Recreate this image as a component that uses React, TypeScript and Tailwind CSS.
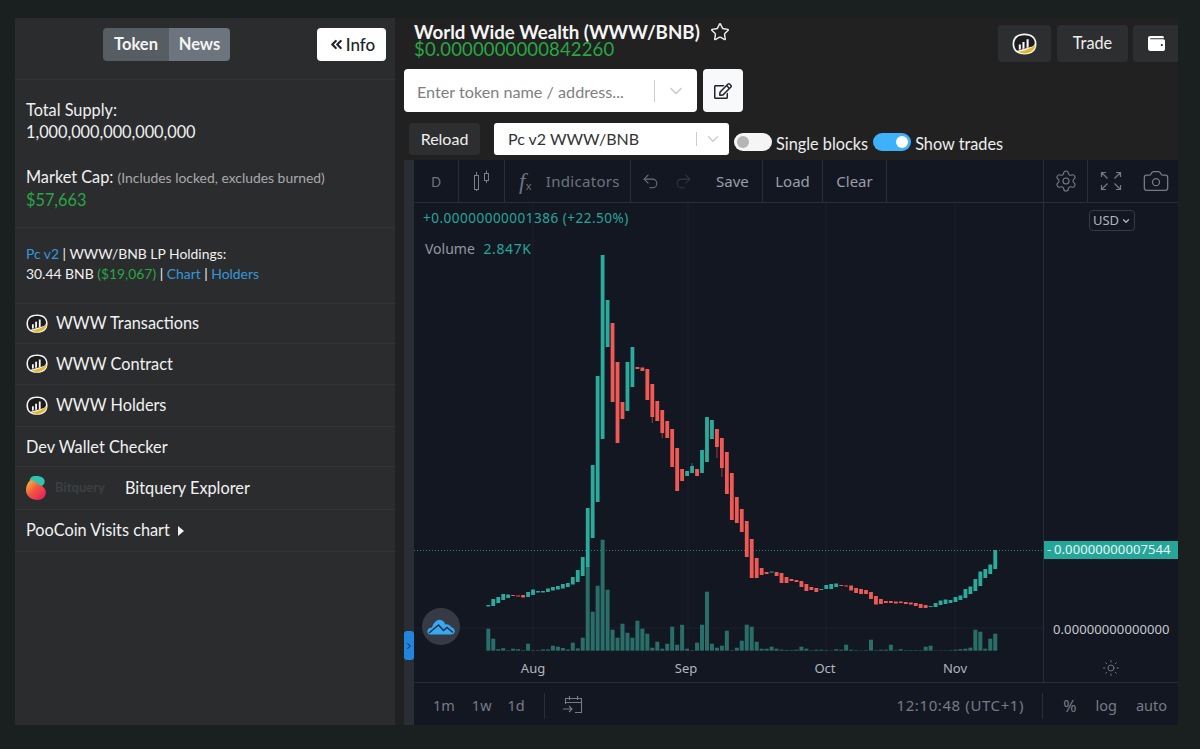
import { Camera, ChevronDown, ChevronRight, ChevronsLeft, Redo2, Settings, Star, Sun, Undo2 } from "lucide-react";
import { FaRegEdit, FaWallet } from "react-icons/fa";

// top, bottom, direction, optional wick end (page pixels, the svg viewBox starts at the plot's corner)
type Candle = [number, number, "u" | "d", number?];

const candles: Candle[] = [
  [605, 606.5, "u"], [599, 606, "u"], [597, 603, "u"], [594, 600, "u"], [594.5, 598, "u"], [595, 596, "d"],
  [595.5, 596.5, "d"], [595, 597.5, "d"], [592, 597, "u"], [589.5, 595, "u"], [591, 592.5, "u"], [591, 592.5, "u"],
  [588.5, 592, "u"], [587, 590.5, "u"], [586, 589.5, "u"], [584, 588.5, "u"], [583, 587, "u"], [577, 584.5, "u"],
  [570, 582, "u"], [557, 576, "u"], [508, 567, "u"], [465, 538, "u"], [376, 502, "u"], [255, 439, "u"],
  [300, 347, "u"], [323, 402, "d"], [362, 443, "d"], [402, 419, "d"], [362, 411, "u"], [347, 387, "u"],
  [367, 369, "d"], [367.5, 371, "d"], [369, 400, "d"], [384, 417, "d", 423], [401, 421, "d"], [410, 433, "d", 438],
  [421, 438, "d"], [429, 467, "d"], [448, 491, "d"], [469, 481, "d"], [471, 476, "u"], [466, 473, "u", 463],
  [469, 476, "d"], [450, 473, "u"], [417, 462, "u"], [420, 439, "u"], [429, 447, "d", 458], [438, 468, "d", 477],
  [452, 494, "d"], [473, 520, "d"], [497, 523, "d"], [509, 532, "d"], [521, 557, "d"], [539, 578, "d"],
  [558, 578, "d"], [568, 575, "d"], [572, 574, "d"], [571.5, 572.5, "u"], [572, 576, "d"], [573, 583, "d"],
  [577, 583, "d"], [579, 581, "d"], [580, 582, "d"], [581, 587, "d"], [584, 591, "d"], [587, 590, "d"],
  [588, 592, "d"], [589, 590, "u"], [585, 589, "u"], [584, 589, "u"], [583.5, 587, "u"], [585, 586, "d"],
  [585.5, 586.5, "d"], [585.5, 590.5, "d"], [588, 593, "d"], [589, 594, "d"], [590, 594, "d"], [592, 599, "d"],
  [596, 604.5, "d"], [599, 604, "d"], [601, 603, "d"], [601, 603, "d"], [601.5, 603.5, "d"], [601.5, 603, "d"],
  [602, 604, "d"], [602.5, 604.5, "d"], [603, 606, "d"], [604, 608, "d"], [605, 608, "d"], [606, 607, "u"],
  [603, 607, "u"], [600.5, 605, "u"], [599.5, 604, "u"], [600, 603, "u"], [597, 602, "u"], [595.5, 600, "u"],
  [589, 598, "u"], [586.5, 594, "u"], [579, 591, "u"], [571.5, 586, "u"], [569, 578, "u"], [564.5, 574, "u"],
  [550, 569, "u"],
];

const volumes = [
  22, 12, 1.5, 2.5, 0.5, 2, 1.5, 0.5, 7, 0.5, 0.5, 1.3, 1.3, 5, 4, 2.7, 1.3, 8, 2.3, 13, 84, 39, 65, 111, 61, 21,
  13, 27, 18, 13, 30, 22, 17, 3, 9, 2, 7, 24, 6, 26, 2, 0.5, 8, 26, 59, 7, 3, 5, 20, 0.5, 3, 10, 26, 24, 9, 2, 2,
  4, 2, 1, 0.7, 0.7, 1, 4, 2, 0.5, 1, 1, 0.5, 0.3, 1.5, 1, 6, 1, 0.5, 0.3, 0.5, 11, 0.5, 1, 1, 6, 0.5, 1.5, 0.5,
  0.5, 0.5, 0.5, 4, 5, 0.3, 0.3, 0.3, 0.5, 1, 1.5, 2, 3, 21, 19, 2, 12, 17,
];

const xOf = (i: number) => 488.3 + i * 4.97;

const PooLogo = ({ size = 22 }: { size?: number }) => (
  <svg width={size} height={size * 0.88} viewBox="0 0 24 21" className="shrink-0">
    <path d="M12 .5C19 .5 23.5 4 23.5 10.500C23.5 17 19 20.500 12 20.500C5 20.500 .5 17 .5 10.500C.5 4 5 .5 12 .5z" fill="#f7f7f5" />
    <path d="M12 2.200C17.800 2.200 21.800 5 21.800 9.500C21.800 11 21 12 19.500 13L5 17C3 15.500 2.200 13 2.200 10C2.200 5 6.200 2.200 12 2.200z" fill="#1c1c1e" />
    <path d="M6 17.800C11 17.500 17 15.500 22.500 11.500C22 16 18 19.500 12 19.500C9.500 19.500 7.500 19 6 17.800z" fill="#e3b62b" />
    <path d="M6.500 11h2v4.600l-2 .5zM10 8.500h2v6.300l-2 .5zM14 6h2v7.800l-2 .6z" fill="#f7f7f5" />
  </svg>
);

const BitqueryLogo = () => (
  <svg width="20" height="24" viewBox="0 0 20 24" className="shrink-0">
    <defs>
      <linearGradient id="bq" x1="0.1" y1="0.2" x2="0.8" y2="0.9">
        <stop offset="0" stopColor="#f5a03c" />
        <stop offset="0.45" stopColor="#f0553f" />
        <stop offset="1" stopColor="#e8265e" />
      </linearGradient>
    </defs>
    <path d="M5 1.500C7 -.5 14 -.5 17 2c2.500 2.200 2 5.800-.5 7.500C13 11.500 8 10 5 7.500 3 5.800 3.500 3 5 1.500z" fill="#2fc4b2" />
    <path d="M2 7C3.500 4 6 3.500 8 5c2 1.600 4 3 7 4.500 3.500 1.800 5 4.500 4.800 7.500-.3 4-3.600 7-8 7C5 24 0 20 0 14c0-2.500.8-5 2-7z" fill="url(#bq)" />
  </svg>
);

const CandleIcon = () => (
  <svg width="18" height="22" viewBox="0 0 18 22" fill="none" stroke="currentColor" strokeWidth="1">
    <rect x="1.500" y="5.500" width="4" height="14" />
    <path d="M3.500 2v3.500M3.500 19.500V21" />
    <rect x="11.500" y="3.500" width="4" height="7" />
    <path d="M13.500 0.500v3M13.500 10.500V13" />
  </svg>
);

const ExpandIcon = () => (
  <svg width="22" height="20" viewBox="0 0 22 20" fill="none" stroke="currentColor" strokeWidth="1.200">
    <path d="M1.500 6V1.500H6M1.500 1.500l6 6M20.500 6V1.500H16M20.500 1.500l-6 6M1.500 14v4.500H6M1.500 18.500l6-6M20.500 14v4.500H16M20.500 18.500l-6-6" />
  </svg>
);

const CalendarGo = () => (
  <svg width="22" height="20" viewBox="0 0 22 20" fill="none" stroke="currentColor" strokeWidth="1.100">
    <path d="M3.500 9V3.500h16v14H13M3.500 7.500h16M7.500 1v4M15.500 1v4M1 14h9M7 11l3 3-3 3" />
  </svg>
);

const CloudLogo = () => (
  <div className="flex h-[37px] w-[38px] items-center justify-center rounded-full bg-[#363a45]">
    <svg width="28" height="16" viewBox="0 0 28 16">
      <path d="M4 15.500C1 15.500 0 13.500 .5 11.500 1 9.500 3 8.500 5 8.500 6 5 9 1 12.500 .8 15.500 .7 17.500 3 18.500 5.500 20.500 5 23 5.800 24 8 26.500 8.500 28 10.500 27.800 12.500 27.500 14.500 26 15.500 24 15.500z" fill="#37a8f2" />
      <path d="M2 14 11.500 6 16.500 11.500 20 8.500 26 13.500" fill="none" stroke="#27303f" strokeWidth="1.600" />
    </svg>
  </div>
);

const Toggle = ({ on }: { on?: boolean }) => (
  <span className={`flex h-[18px] w-[38px] items-center rounded-full px-[3px] ${on ? "justify-end bg-[#3fb1fb]" : "justify-start bg-[#f5f5f5]"}`}>
    <span className={`h-[12px] w-[12px] rounded-full ${on ? "bg-white" : "bg-[#b5b5b5]"}`} />
  </span>
);

const SideRow = ({ children, h }: { children: React.ReactNode; h: string }) => (
  <div className={`flex ${h} items-center border-b border-[#333436] pl-[11px] text-[16.3px] text-[#f2f2f2]`}>{children}</div>
);

const Sidebar = () => (
  <aside className="w-[380px] shrink-0 bg-[#2b2c2e] font-['Lato',sans-serif]">
    <div className="relative flex h-[62px] items-start justify-end border-b border-[#333436] pr-[9px] pt-[10px]">
      <div className="absolute left-[88px] top-[10px] flex h-[33px] overflow-hidden rounded-[4px] text-[16.5px] font-bold text-[#f4f4f4]">
        <span className="flex w-[66px] items-center justify-center bg-[#565d63]">Token</span>
        <span className="flex w-[61px] items-center justify-center bg-[#6c757d]">News</span>
      </div>
      <button className="flex h-[33px] w-[69px] items-center justify-center rounded-[4px] bg-white text-[17px] font-medium text-[#212529]">
        <ChevronsLeft size={17} strokeWidth={3} className="mr-[1px]" />
        Info
      </button>
    </div>

    <div className="h-[148px] border-b border-[#333436] pl-[11px] pt-[19px] text-[16.3px] leading-[22px] text-[#f0f0f0]">
      <div>Total Supply:</div>
      <div>1,000,000,000,000,000</div>
      <div className="mt-[23px]">
        Market Cap: <span className="text-[13.9px] text-[#a9aaab]">(Includes locked, excludes burned)</span>
      </div>
      <div className="text-[#28a745]">$57,663</div>
    </div>

    <div className="h-[76px] border-b border-[#333436] pl-[11px] pt-[16px] text-[13.9px] leading-[20px] text-[#f0f0f0]">
      <div>
        <span className="text-[#3498db]">Pc v2</span> | WWW/BNB LP Holdings:
      </div>
      <div>
        30.44 BNB <span className="text-[#28a745]">($19,067)</span> | <span className="text-[#3498db]">Chart</span> |{" "}
        <span className="text-[#3498db]">Holders</span>
      </div>
    </div>

    <SideRow h="h-[40px]">
      <PooLogo />
      <span className="ml-[8px] pb-[1px]">WWW Transactions</span>
    </SideRow>
    <SideRow h="h-[41px]">
      <PooLogo />
      <span className="ml-[8px] pt-[1px]">WWW Contract</span>
    </SideRow>
    <SideRow h="h-[42px]">
      <PooLogo />
      <span className="ml-[8px] pb-[1px]">WWW Holders</span>
    </SideRow>
    <SideRow h="h-[40px]">
      <span className="pt-[1px]">Dev Wallet Checker</span>
    </SideRow>
    <SideRow h="h-[43px]">
      <BitqueryLogo />
      <span className="ml-[9px] w-[70px] text-[13px] font-bold text-[#3b4043]">Bitquery</span>
      <span>Bitquery Explorer</span>
    </SideRow>
    <SideRow h="h-[42px]">
      PooCoin Visits chart
      <span className="ml-[8px] h-0 w-0 border-y-[5px] border-l-[6px] border-y-transparent border-l-[#f2f2f2]" />
    </SideRow>
  </aside>
);

const TopBar = () => (
  <div className="h-[142px] shrink-0 bg-[#212121] font-['Lato',sans-serif]">
    <div className="flex h-[51px] items-start">
      <div className="ml-[19px] mt-[4px] flex-1">
        <div className="flex items-center text-[18.7px] font-bold leading-[18px] text-[#f5f5f5]">
          World Wide Wealth (WWW/BNB)
          <Star size={20} className="ml-[10px] text-[#eee]" strokeWidth={1.7} />
        </div>
        <div className="text-[18.5px] leading-[15px] tracking-[0.15px] text-[#28a745]">$0.0000000000842260</div>
      </div>
      <div className="mt-[7px] flex h-[37px] overflow-hidden">
        <span className="flex w-[53px] items-center justify-center rounded-[4px] bg-[#2d2e30]">
          <PooLogo size={25} />
        </span>
        <span className="ml-[6px] flex w-[71px] items-center justify-center rounded-[4px] bg-[#2d2e30] text-[16.3px] text-[#eee]">Trade</span>
        <span className="ml-[5px] flex w-[45px] items-center rounded-l-[4px] bg-[#2d2e30] pl-[15px] text-white">
          <FaWallet size={17} />
        </span>
      </div>
    </div>
    <div className="flex h-[43px] pl-[9px]">
      <div className="flex w-[293px] items-center rounded-[4px] bg-white pl-[13px] text-[16.2px] text-[#808080]">
        <span className="flex-1 pt-[3px]">Enter token name / address...</span>
        <span className="h-[22px] w-px bg-[#ccc]" />
        <ChevronDown size={20} className="mx-[11px] text-[#ccc]" strokeWidth={2} />
      </div>
      <span className="ml-[6px] flex w-[40px] items-center justify-center rounded-[4px] bg-[#f8f9fa] text-[#212529]">
        <FaRegEdit size={18} />
      </span>
    </div>
    <div className="mt-[11px] flex h-[32px] pl-[14px]">
      <button className="w-[71px] rounded-[4px] bg-[#2d2e30] text-[16px] text-[#eee]">Reload</button>
      <div className="ml-[14px] flex w-[235px] items-center rounded-[3px] bg-white pl-[14px] text-[16px] text-[#333]">
        <span className="flex-1">Pc v2 WWW/BNB</span>
        <span className="h-[14px] w-px bg-[#ccc]" />
        <ChevronDown size={18} className="mx-[7px] text-[#ccc]" strokeWidth={2} />
      </div>
      <div className="flex items-end text-[16.3px] leading-[22px] text-[#eee]">
        <span className="mb-[4px] ml-[5px]">
          <Toggle />
        </span>
        <span className="ml-[4px]">Single blocks</span>
        <span className="mb-[4px] ml-[5px]">
          <Toggle on />
        </span>
        <span className="ml-[4px]">Show trades</span>
      </div>
    </div>
  </div>
);

const PlotSvg = () => (
  <svg width="629" height="479" viewBox="414 203 629 479" className="shrink-0">
    {[533, 688, 826, 955].map((x) => (
      <line key={x} x1={x} x2={x} y1={203} y2={655} stroke="#1c212c" />
    ))}
    <line x1={414} x2={1043} y1={628} y2={628} stroke="#1c212c" />
    <line x1={414} x2={1043} y1={550.5} y2={550.5} stroke="#2f7f78" strokeDasharray="1 2" />
    {volumes.map((v, i) => (
      <rect key={i} x={xOf(i) - 2} width={4} y={650.7 - v} height={v} fill="#2a6e69" />
    ))}
    {candles.map(([top, bottom, dir, wick], i) => {
      const color = dir === "u" ? "#2bab9c" : "#ef5a55";
      return (
        <g key={i}>
          {wick !== undefined && (
            <line x1={xOf(i)} x2={xOf(i)} y1={wick < top ? wick : bottom} y2={wick < top ? top : wick} stroke={color} strokeOpacity={0.6} />
          )}
          <rect x={xOf(i) - 1.9} width={3.8} y={top} height={bottom - top} fill={color} />
        </g>
      );
    })}
    <g fontSize="13" fill="#b2b5be" textAnchor="middle" fontFamily="'Noto Sans', sans-serif">
      <text x={533} y={673}>Aug</text>
      <text x={686} y={673}>Sep</text>
      <text x={825} y={673}>Oct</text>
      <text x={955} y={673}>Nov</text>
    </g>
  </svg>
);

const ChartHeader = () => (
  <div className="flex h-[43px] shrink-0 border-b border-[#2a2e39] bg-[#131722] text-[15px] text-[#9a9ea8]">
    <div className="flex w-[45px] items-center justify-center border-r border-[#2a2e39] text-[14px] text-[#6f737d]">D</div>
    <div className="flex w-[46px] items-center justify-center border-r border-[#2a2e39] text-[#7b7f89]">
      <CandleIcon />
    </div>
    <div className="flex w-[126px] items-center border-r border-[#2a2e39] pl-[14px] tracking-[0.3px] text-[#6f737d]">
      <span className="font-['Liberation_Serif',serif] text-[23px] italic leading-none">f</span>
      <span className="mr-[14px] mt-[8px] text-[11px] leading-none">x</span>
      Indicators
    </div>
    <div className="flex w-[132px] items-center border-r border-[#2a2e39] pl-[10px]">
      <Undo2 size={19} className="text-[#6f737d]" strokeWidth={1.3} />
      <Redo2 size={19} className="ml-[14px] text-[#33373f]" strokeWidth={1.3} />
      <span className="ml-[23px]">Save</span>
    </div>
    <div className="flex w-[60px] items-center justify-center border-r border-[#2a2e39]">Load</div>
    <div className="flex w-[64px] items-center justify-center border-r border-[#2a2e39]">Clear</div>
    <div className="w-[157px] border-r border-[#2a2e39]" />
    <div className="flex w-[44px] items-center justify-center border-r border-[#2a2e39] text-[#787b86]">
      <Settings size={24} strokeWidth={1.1} />
    </div>
    <div className="flex flex-1 items-center text-[#787b86]">
      <span className="ml-[12px]">
        <ExpandIcon />
      </span>
      <Camera size={28} strokeWidth={1.1} className="ml-[20px]" />
    </div>
  </div>
);

const PriceAxis = () => (
  <div className="relative flex-1 border-l border-[#2a2e39]">
    <div className="absolute left-[45px] top-[7px] flex h-[21px] w-[46px] items-center justify-center gap-[2px] rounded-[4px] border border-[#363a45] text-[13px] text-[#b2b5be]">
      USD
      <ChevronDown size={10} strokeWidth={3} />
    </div>
    <div className="absolute inset-x-0 top-[338px] flex h-[18px] items-center bg-[#26a69a] pl-[3px] text-[13px] tracking-[0.1px] text-[#e8f5f3]">
      <span className="w-[7px]">-</span>
      <span>0.00000000007544</span>
    </div>
    <div className="absolute left-[9px] top-[417px] text-[13px] tracking-[0.1px] text-[#c7c9cf]">0.00000000000000</div>
    <Sun size={18} strokeWidth={1.2} className="absolute left-[58px] top-[456px] text-[#787b86]" />
  </div>
);

const ChartFooter = () => (
  <div className="flex h-[43px] flex-1 items-center border-t border-[#2a2e39] pt-[3px] text-[14.5px] text-[#787b86]">
    <span className="ml-[19px]">1m</span>
    <span className="ml-[17px]">1w</span>
    <span className="ml-[16px]">1d</span>
    <span className="ml-[19px] h-[26px] w-px bg-[#2a2e39]" />
    <span className="ml-[17px] mb-[2px]">
      <CalendarGo />
    </span>
    <span className="ml-auto text-[15px] tracking-[0.6px]">12:10:48 (UTC+1)</span>
    <span className="ml-[18px] h-[26px] w-px bg-[#2a2e39]" />
    <span className="ml-[20px] text-[16px]">%</span>
    <span className="ml-[19px]">log</span>
    <span className="ml-[19px] mr-[11px]">auto</span>
  </div>
);

export default function App() {
  return (
    <div className="flex h-[749px] w-[1200px] overflow-hidden bg-[#1a1f1f] pb-[24px] pl-[15px] pr-[22px] pt-[18px]">
      <Sidebar />
      <main className="flex min-w-0 flex-1 flex-col bg-[#212121]">
        <TopBar />
        <div className="flex flex-1 pl-[9px]">
          <div className="relative w-[10px] shrink-0 bg-[#2a2d33]">
            <div className="absolute left-0 top-[471px] flex h-[29px] w-[10px] items-center justify-center rounded-[3px] bg-[#2185e0] text-[#0f2a44]">
              <ChevronRight size={10} strokeWidth={2.5} />
            </div>
          </div>
          <div className="flex min-w-0 flex-1 flex-col bg-[#131722] font-['Noto_Sans',sans-serif]">
            <ChartHeader />
            <div className="relative flex h-[479px] shrink-0">
              <PlotSvg />
              <PriceAxis />
              <div className="absolute left-[9px] top-[5px] text-[13.5px] tracking-[0.5px] text-[#26a69a]">+0.00000000001386 (+22.50%)</div>
              <div className="absolute left-[11px] top-[35px] text-[14px] text-[#9598a1]">
                Volume <span className="ml-[5px] tracking-[0.6px] text-[#26a69a]">2.847K</span>
              </div>
              <div className="absolute left-[8px] top-[405px]">
                <CloudLogo />
              </div>
            </div>
            <ChartFooter />
          </div>
        </div>
      </main>
    </div>
  );
}
